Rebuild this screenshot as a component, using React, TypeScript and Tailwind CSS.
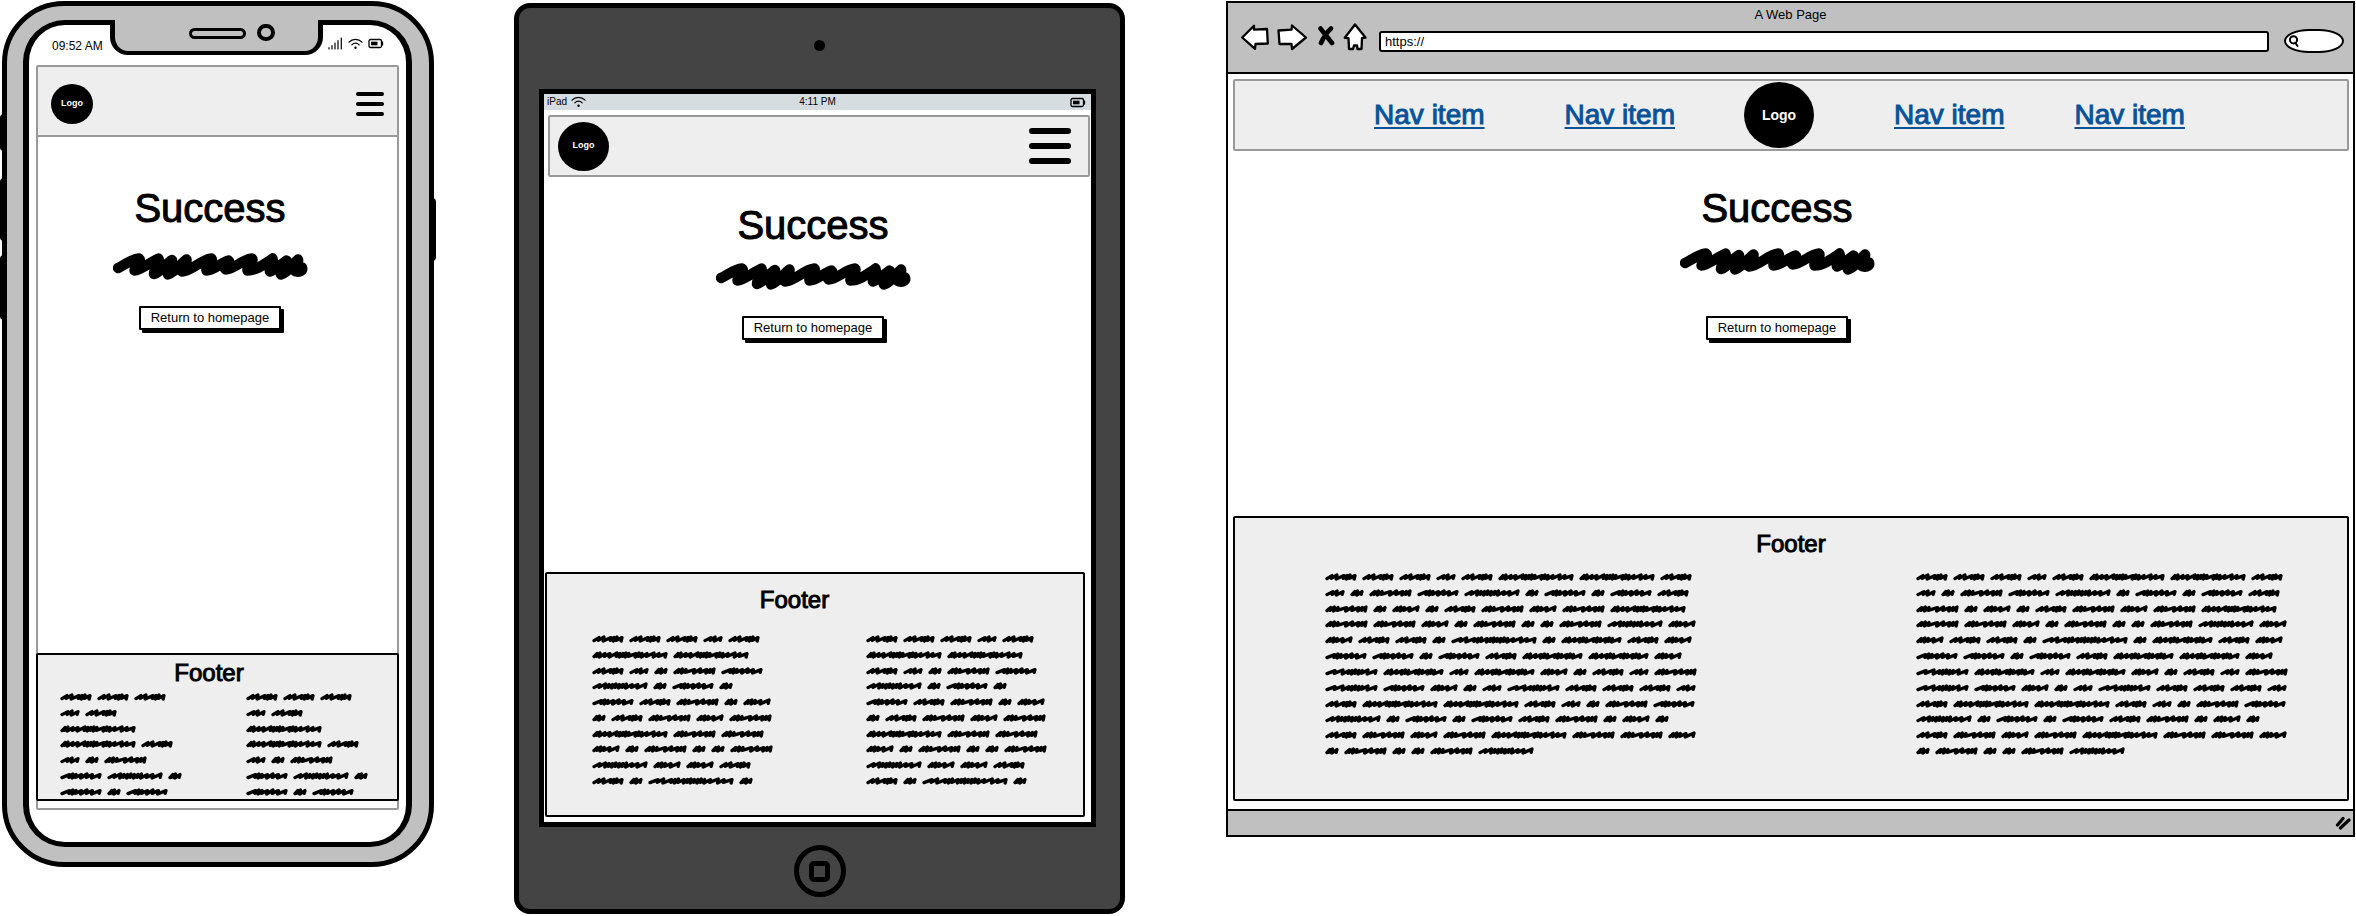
import React from "react";

/* ---------- scribbled placeholder text ---------- */

type Glyph = { width: number; strokes: string };

// w = wide wave, n = normal stroke, d = dense stroke
const GLYPHS: Record<string, Glyph> = {
  a: { width: 32, strokes: "nnwddn" },
  b: { width: 20, strokes: "wnw" },
  c: { width: 14, strokes: "ddn" },
  d: { width: 43, strokes: "dddwnndd" },
  e: { width: 42, strokes: "wddnnnw" },
  f: { width: 56, strokes: "nnddddddnnw" },
  g: { width: 76, strokes: "ddnnwddddwddnwnw" },
  h: { width: 28, strokes: "dddnw" },
  i: { width: 61, strokes: "ddnnddwddnddw" },
  j: { width: 86, strokes: "wnwddnddddddnwnw" },
  k: { width: 53, strokes: "wwnddddnw" },
};

const ADVANCE: Record<string, number> = { w: 7, n: 5, d: 3 };

const PHONE_WORDS = "aaabaggabcdefcece";
const TABLET_WORDS = "aaabaggabcdefceceadchcadhdgddhcdccdfhhaacjc";
const BROWSER_WORDS = [
  "aaabagga",
  "bcdefcecea",
  "dchcadhdg",
  "ddhcdccdfh",
  "haacjciah",
  "eeceaiih",
  "kibihcabd",
  "kehcbkaaab",
  "aggabcde",
  "fceceadchc",
  "adhdgddh",
  "cdccdf",
].join("");

function wordPath({ width, strokes }: Glyph): string {
  const total = strokes.split("").reduce((sum, s) => sum + ADVANCE[s], 0);
  const scale = (width - 4) / total;
  let x = 2;
  let path = `M${x} 5.6`;
  strokes.split("").forEach((s, n) => {
    x += ADVANCE[s] * scale;
    const top = n % 3 === 1 ? 2 : 2.6;
    path += ` L${x.toFixed(1)} ${top} L${(x - 0.8).toFixed(1)} ${n % 2 ? 6 : 5.4}`;
  });
  return path;
}

function Word({ kind }: { kind: string }) {
  const glyph = GLYPHS[kind];
  return (
    <svg width={glyph.width} height="8" viewBox={`0 0 ${glyph.width} 8`} className="block shrink-0" aria-hidden="true">
      <path d={wordPath(glyph)} fill="none" stroke="#000" strokeWidth="3.3" strokeLinecap="round" strokeLinejoin="round" />
    </svg>
  );
}

function Scribbles({ words, className }: { words: string; className: string }) {
  return (
    <div className={`flex shrink-0 flex-wrap content-between gap-x-[5px] ${className}`}>
      {words.split("").map((kind, i) => (
        <Word key={i} kind={kind} />
      ))}
    </div>
  );
}

function BigScribble({ className }: { className: string }) {
  return (
    <svg width="195" height="27" viewBox="12 13.5 195 27" className={`block ${className}`} aria-hidden="true">
      <path
        d="M17 28.5 C24 25 31 19.5 38 19 C41 21 34 27 33.5 31 C40 31 50 22 57.5 19 C60 22 52 31 53 34.5 C59 33 65 24 71 20.5 C72 24 65 32 67 35 C75 32 80 24 85.5 20 C87 24 78 30 81 32 C92 31 100 20 110.5 19 C113 22 104 27 105.5 31 C113 31 120 23 127.5 21 C130 23 122 28 124.5 30 C133 30 141 20 151 19 C154 22 145 27 146.5 31 C156 31 164 24 171.5 19 C174 22 167 29 169 32 C175 30 181 24 185.500 21 C187 25 178 32 180 35 C187 33 192 24 197 20 C199 24 190 30 195 32 C199 33 202 31 201 28"
        fill="none"
        stroke="#000"
        strokeWidth="10.4"
        strokeLinecap="round"
        strokeLinejoin="round"
      />
    </svg>
  );
}

/* ---------- shared pieces ---------- */

function WifiIcon() {
  return (
    <svg width="15" height="12" viewBox="0 0 15 12" fill="none" stroke="#000" strokeWidth="1.2" strokeLinecap="round" aria-hidden="true">
      <path d="M1 4.2 C4.5 .5 10.5 .5 14 4.2" />
      <path d="M3.8 6.8 C6 4.6 9 4.6 11.2 6.8" />
      <circle cx="7.5" cy="9.8" r="1.2" fill="#000" stroke="none" />
    </svg>
  );
}

function BatteryIcon() {
  return (
    <svg width="16" height="11" viewBox="0 0 16 11" aria-hidden="true">
      <rect x="1" y="1.5" width="12.5" height="8" rx="1.5" fill="none" stroke="#000" strokeWidth="1.3" />
      <rect x="3" y="3.7" width="6.5" height="3.6" fill="#000" />
      <path d="M14.5 3.5 V7.5" stroke="#000" strokeWidth="1.3" />
    </svg>
  );
}

function SignalIcon() {
  return (
    <svg width="15" height="13" viewBox="0 0 15 13" stroke="#000" strokeWidth="1.2" strokeLinecap="round" aria-hidden="true">
      <path d="M1 10.5 V12 M4 8.5 V12 M7 6 V12 M10 3.5 V12 M13.3 1 V12" />
    </svg>
  );
}

function Logo({ className }: { className: string }) {
  return (
    <a href="#" className={`flex items-center justify-center rounded-[50%] bg-black font-bold text-white ${className}`}>
      Logo
    </a>
  );
}

function Burger({ className, bar }: { className: string; bar: string }) {
  return (
    <button type="button" aria-label="Menu" className={`flex flex-col ${className}`}>
      <span className={`block w-full rounded-full bg-black ${bar}`} />
      <span className={`block w-full rounded-full bg-black ${bar}`} />
      <span className={`block w-full rounded-full bg-black ${bar}`} />
    </button>
  );
}

function Success({ scribbleGap, buttonGap }: { scribbleGap: string; buttonGap: string }) {
  return (
    <>
      <h1 className="text-[40px] leading-[48px] [-webkit-text-stroke:1px_#000]">Success</h1>
      <BigScribble className={scribbleGap} />
      <button
        type="button"
        className={`h-6 w-[142px] rounded-[1px] border-2 border-black bg-white text-[13px] leading-5 whitespace-nowrap shadow-[3px_3px_0_#000] ${buttonGap}`}
      >
        Return to homepage
      </button>
    </>
  );
}

function FooterTitle({ className }: { className: string }) {
  return <h2 className={`text-center text-2xl leading-8 [-webkit-text-stroke:1px_#000] ${className}`}>Footer</h2>;
}

/* ---------- phone ---------- */

function Phone() {
  return (
    <section className="relative mt-px ml-[2px] w-[432px] shrink-0 rounded-[62px] border-5 border-black bg-[#c0c0c0] pt-[14px] pr-[17px] pb-[15px] pl-4">
      <span className="absolute top-[108px] -left-[7px] h-[37px] w-1 rounded-l-sm bg-black" />
      <span className="absolute top-[172px] -left-[7px] h-[63px] w-1 rounded-l-sm bg-black" />
      <span className="absolute top-[249px] -left-[7px] h-[65px] w-1 rounded-l-sm bg-black" />
      <span className="absolute top-[192px] -right-[7px] h-[63px] w-1 rounded-r-sm bg-black" />

      <div className="rounded-[42px] border-x-6 border-y-5 border-black bg-white">
        <div className="flex h-10">
          <div className="flex h-[41px] w-[81px] shrink-0 items-center pl-[23px] text-xs whitespace-nowrap">09:52 AM</div>
          <div className="-mt-[5px] flex h-[35px] w-[213px] shrink-0 justify-center gap-[11px] rounded-b-[18px] border-x-5 border-b-4 border-black bg-[#c0c0c0] pl-[30px]">
            <span className="mt-2 h-[11px] w-[57px] rounded-full border-3 border-black" />
            <span className="mt-1 h-[17px] w-[18px] rounded-full border-4 border-black" />
          </div>
          <div className="flex h-[37px] items-center gap-[5px] pl-[5px]">
            <SignalIcon />
            <WifiIcon />
            <BatteryIcon />
          </div>
        </div>

        <div className="mx-[7px] mb-8 rounded-[2px] border-2 border-[#999] pb-[7px]">
          <header className="flex h-[70px] items-center justify-between border-b-2 border-[#999] bg-[#eee] px-[13px] pt-[6px]">
            <Logo className="h-10 w-[42px] text-[9px]" />
            <Burger className="w-7 gap-[6px]" bar="h-1" />
          </header>
          <main className="flex min-h-[516px] flex-col items-center pt-[47px] pr-[15px]">
            <Success scribbleGap="mt-[21px]" buttonGap="mt-[26px]" />
          </main>
          <footer className="-mx-[2px] rounded-[2px] border-2 border-black bg-[#eee] pt-[2px] pb-[3px]">
            <FooterTitle className="pr-[17px]" />
            <div className="mt-1 flex gap-[60px] pl-[22px]">
              <Scribbles words={PHONE_WORDS} className="h-[103px] w-[126px]" />
              <Scribbles words={PHONE_WORDS} className="h-[103px] w-[126px]" />
            </div>
          </footer>
        </div>
      </div>
    </section>
  );
}

/* ---------- tablet ---------- */

function Tablet() {
  return (
    <section className="mt-[3px] ml-20 flex w-[611px] shrink-0 flex-col items-center rounded-[16px] border-5 border-black bg-[#444] pt-8 pb-3">
      <span className="size-[11px] rounded-full bg-black" />
      <div className="mt-[38px] mr-6 ml-5 self-stretch border-5 border-black bg-white">
        <div className="grid h-4 grid-cols-3 items-center bg-[#d6dde0] px-[3px] text-[10px] leading-4">
          <span className="flex items-center gap-1">
            iPad <WifiIcon />
          </span>
          <span className="text-center">4:11 PM</span>
          <span className="flex justify-end pr-[2px]">
            <BatteryIcon />
          </span>
        </div>
        <header className="mt-[5px] mr-px ml-1 flex h-[62px] items-center justify-between rounded-[2px] border-2 border-[#999] bg-[#eee] pr-[17px] pl-2">
          <Logo className="h-[49px] w-[51px] text-[9px]" />
          <Burger className="w-[42px] gap-[9px]" bar="h-[6px]" />
        </header>
        <main className="flex min-h-[395px] flex-col items-center pt-6 pr-[9px]">
          <Success scribbleGap="mt-[14px]" buttonGap="mt-[26px]" />
        </main>
        <footer className="mr-[6px] mb-[5px] ml-px rounded-[2px] border-2 border-black bg-[#eee] pt-[10px] pb-[30px]">
          <FooterTitle className="pr-[41px]" />
          <div className="mt-[19px] flex gap-[90px] pl-[45px]">
            <Scribbles words={TABLET_WORDS} className="h-[150px] w-[184px]" />
            <Scribbles words={TABLET_WORDS} className="h-[150px] w-[184px]" />
          </div>
        </footer>
      </div>
      <button
        type="button"
        aria-label="Home"
        className="mt-[18px] flex size-[52px] items-center justify-center rounded-full border-5 border-black"
      >
        <span className="size-[21px] rounded-[5px] border-5 border-black" />
      </button>
    </section>
  );
}

/* ---------- browser ---------- */

function ToolbarIcon({ label, width, path, solid }: { label: string; width: number; path: string; solid?: boolean }) {
  return (
    <button type="button" aria-label={label}>
      <svg width={width} height="28" viewBox={`0 0 ${width} 28`} className="block" aria-hidden="true">
        <path
          d={path}
          fill={solid ? "none" : "#fff"}
          stroke="#000"
          strokeWidth={solid ? 4.6 : 2.3}
          strokeLinejoin="round"
          strokeLinecap="round"
        />
      </svg>
    </button>
  );
}

function NavLink() {
  return (
    <a
      href="#"
      className="whitespace-nowrap text-[#085299] underline decoration-2 underline-offset-[3px] [-webkit-text-stroke:1px_#085299]"
    >
      Nav item
    </a>
  );
}

function Browser() {
  return (
    <section className="mt-px mr-px ml-[101px] min-w-[900px] flex-1 border-2 border-black bg-white">
      <div className="h-[71px] border-b-2 border-black bg-[#c0c0c0] pt-1">
        <div className="text-center text-[13px] leading-4">A Web Page</div>
        <div className="flex items-start pr-[9px] pl-[13px]">
          <div className="flex gap-2">
            <ToolbarIcon label="Back" width={28} path="M1.2 14.5 L13 2.8 V6.7 L26 6 L26.8 20.5 L14.5 21 L14 25.8 Z" />
            <ToolbarIcon label="Forward" width={32} path="M1.5 7.5 L14.5 6.7 L15 2.5 L29 14.5 L15 26 L14.5 21 L2.5 21 Z" />
            <ToolbarIcon label="Stop" width={18} solid path="M3.5 5.5 L15 20 M14 5.5 Q8 11 4 20" />
            <ToolbarIcon
              label="Home page"
              width={24}
              path="M12 1.5 L1.8 14.8 L5.5 15.2 L6 26 H10 L11 22.5 H14 L14.5 26 H18.5 L19 15.2 L22.5 14.5 Z"
            />
          </div>
          <input
            type="text"
            aria-label="Address"
            defaultValue="https://"
            className="mt-2 ml-3 h-[21px] min-w-0 flex-1 rounded-[3px] border-2 border-black bg-white px-1 text-[13px] leading-4 outline-none"
          />
          <label className="mt-[6px] ml-[15px] flex h-6 w-[60px] items-center rounded-[50%/60%] border-2 border-black bg-white pl-[2px]">
            <svg width="12" height="14" viewBox="0 0 12 14" fill="none" stroke="#000" strokeWidth="2" strokeLinecap="round" aria-hidden="true">
              <circle cx="5.5" cy="5.8" r="3.6" />
              <path d="M7.5 9 L9.5 12" />
            </svg>
            <input type="text" aria-label="Search" className="w-9 min-w-0 bg-transparent text-xs outline-none" />
          </label>
        </div>
      </div>

      <header className="mt-[5px] mr-1 ml-[5px] flex h-[72px] items-center justify-center rounded-[2px] border-2 border-[#999] bg-[#eee] pr-[23px]">
        <nav className="flex items-center text-[28px] leading-9">
          <div className="flex gap-20">
            <NavLink />
            <NavLink />
          </div>
          <Logo className="mr-20 ml-[69px] h-[66px] w-[70px] text-sm" />
          <div className="flex gap-[70px]">
            <NavLink />
            <NavLink />
          </div>
        </nav>
      </header>

      <main className="flex min-h-[365px] flex-col items-center pt-[33px] pr-[27px]">
        <Success scribbleGap="mt-4" buttonGap="mt-[41px]" />
      </main>

      <footer className="mr-1 ml-[5px] rounded-[2px] border-2 border-black bg-[#eee] pt-[10px] pb-11">
        <FooterTitle className="" />
        <div className="mt-[13px] flex justify-between pr-[57px] pl-[90px]">
          <Scribbles words={BROWSER_WORDS} className="h-[182px] w-[374px]" />
          <Scribbles words={BROWSER_WORDS} className="h-[182px] w-[374px]" />
        </div>
      </footer>

      <div className="mt-2 flex h-[26px] items-center justify-end border-t-2 border-black bg-[#c0c0c0] pr-[2px]">
        <svg width="16" height="14" viewBox="0 0 16 14" stroke="#000" strokeWidth="3.2" strokeLinecap="round" aria-hidden="true">
          <path d="M2.5 9 L8 2.5 M5.5 12 L14 4" />
        </svg>
      </div>
    </section>
  );
}

export default function App() {
  return (
    <div className="flex min-h-screen items-start bg-white font-['Liberation_Sans',Arial,sans-serif] text-black">
      <Phone />
      <Tablet />
      <Browser />
    </div>
  );
}
